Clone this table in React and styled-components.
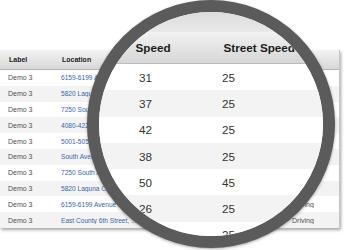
import React from 'react';
import styled, { createGlobalStyle } from 'styled-components';

const Global = createGlobalStyle`
  html, body { margin: 0; padding: 0; background: #fff; }
  body {
    width: 347px;
    height: 250px;
    overflow: hidden;
    font-family: "Liberation Sans", Arial, sans-serif;
  }
`;

const Stage = styled.div`
  position: relative;
  width: 347px;
  height: 250px;
  padding-top: 50px;
  box-sizing: border-box;
  background: #fff;
`;

const cols = '53px 231px 1fr';

const Table = styled.div`
  width: 340px;
  background: #fff;
  border-right: 1px solid #c4c4c4;
  box-sizing: border-box;
  box-shadow: 1px 2px 3px rgba(0, 0, 0, 0.35);
`;

const HeadRow = styled.div`
  display: grid;
  grid-template-columns: ${cols};
  align-items: center;
  height: 20px;
  box-sizing: border-box;
  background: linear-gradient(#f3f3f3, #d8d8d8);
  border-bottom: 1px solid #b8b8b8;
`;

const HeadCell = styled.div`
  padding-left: 9px;
  font-size: 7px;
  font-weight: bold;
  color: #222;
  white-space: nowrap;
  overflow: hidden;
`;

const Row = styled.div`
  display: grid;
  grid-template-columns: ${cols};
  align-items: center;
  height: 15.8px;
  background: ${(p) => (p.$alt ? '#f3f3f3' : '#fff')};
`;

const Cell = styled.div`
  padding-left: 8px;
  font-size: 7px;
  color: #505050;
  white-space: nowrap;
  overflow: hidden;
`;

const Link = styled.a`
  color: #3568ab;
  text-decoration: underline;
  font-size: 6.6px;
`;

const Lens = styled.div`
  position: absolute;
  left: 87px;
  top: 0;
  width: 248px;
  height: 248px;
  box-sizing: border-box;
  border: 12px solid #5b5b5b;
  border-radius: 50%;
  overflow: hidden;
  background: #fff;
  box-shadow: 0 1px 3px rgba(0, 0, 0, 0.35);
`;

const MagTop = styled.div`
  height: 20px;
  background: linear-gradient(#dcdcdc, #e9e9e9);
`;

const MagHead = styled.div`
  display: grid;
  grid-template-columns: 88px 1fr;
  align-items: center;
  height: 32px;
  padding-left: 36.5px;
  box-sizing: border-box;
  background: linear-gradient(#f2f2f2, #d6d6d6);
  border-bottom: 1px solid #bcbcbc;
  font-size: 11.7px;
  font-weight: bold;
  color: #1d1d1d;
  white-space: nowrap;
`;

const MagRow = styled.div`
  display: grid;
  grid-template-columns: 83px 1fr;
  align-items: center;
  height: 26.3px;
  padding-left: 40px;
  box-sizing: border-box;
  background: ${(p) => (p.$alt ? '#f3f3f3' : '#fff')};
  font-size: 11.7px;
  color: #333;
`;

const rows = [
  { loc: '6159-6199 Avenue 64', speed: 31, street: 25 },
  { loc: '5820 Laguna Court', speed: 37, street: 25 },
  { loc: '7250 South Avenue', speed: 42, street: 25 },
  { loc: '4080-4220 Avenue 61', speed: 38, street: 25 },
  { loc: '5001-5059 York Blvd', speed: 50, street: 45 },
  { loc: 'South Avenue 60', speed: 26, street: 25 },
  { loc: '7250 South Avenue', speed: 29, street: 25 },
  { loc: '5820 Laguna Court', speed: 33, street: 25 },
  { loc: '6159-6199 Avenue 64', speed: 31, street: 25 },
  { loc: 'East County 6th Street, ...', speed: 28, street: 25 },
];

export default function App() {
  return (
    <Stage>
      <Global />
      <Table>
        <HeadRow>
          <HeadCell>Label</HeadCell>
          <HeadCell>Location</HeadCell>
          <HeadCell />
        </HeadRow>
        {rows.map((r, i) => (
          <Row key={i} $alt={i % 2 === 1}>
            <Cell>Demo 3</Cell>
            <Cell>
              <Link href="#">{r.loc}</Link>
            </Cell>
            <Cell>Driving</Cell>
          </Row>
        ))}
      </Table>
      <Lens>
        <MagTop />
        <MagHead>
          <span>Speed</span>
          <span>Street Speed</span>
        </MagHead>
        {rows.slice(0, 7).map((r, i) => (
          <MagRow key={i} $alt={i % 2 === 1}>
            <span>{r.speed}</span>
            <span>{r.street}</span>
          </MagRow>
        ))}
      </Lens>
    </Stage>
  );
}
